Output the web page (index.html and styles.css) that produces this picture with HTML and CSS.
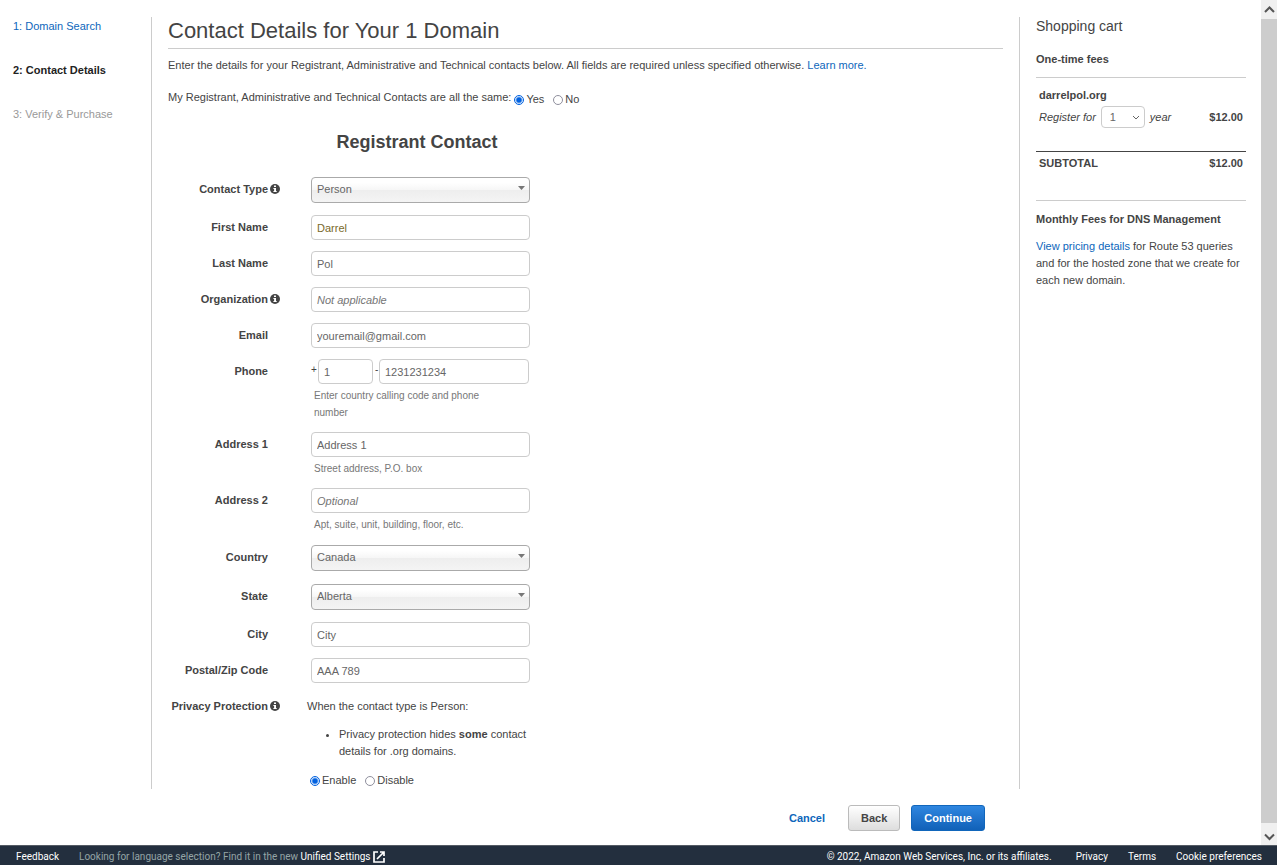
FILE: index.html
```html
<!DOCTYPE html>
<html lang="en">
<head>
<meta charset="utf-8">
<title>Contact Details</title>
<link rel="stylesheet" href="styles.css">
</head>
<body>
<svg class="defs" aria-hidden="true">
  <symbol id="info" viewBox="0 0 10 10"><circle cx="5" cy="5" r="5" fill="#444"/><path d="M4 1.5h2v1.5H4zM3.4 4H6v3h.7v1H3.4V7h.7V5h-.7z" fill="#fff"/></symbol>
</svg>
<div class="app">
  <div class="viewport">
    <div class="page">
      <div class="columns">
        <nav class="steps" aria-label="Steps">
          <a href="#">1: Domain Search</a>
          <span class="current">2: Contact Details</span>
          <span class="upcoming">3: Verify &amp; Purchase</span>
        </nav>
        <main class="content">
          <h1>Contact Details for Your 1 Domain</h1>
          <p class="intro">Enter the details for your Registrant, Administrative and Technical contacts below. All fields are required unless specified otherwise. <a href="#">Learn more.</a></p>
          <div class="same">
            <span>My Registrant, Administrative and Technical Contacts are all the same:</span>
            <div class="radios low">
              <label><input type="radio" name="same" checked>Yes</label>
              <label><input type="radio" name="same">No</label>
            </div>
          </div>
          <form class="form">
            <h2>Registrant Contact</h2>
            <div class="row picker"><label for="type">Contact Type</label><svg class="info"><use href="#info"/></svg>
              <select id="type" class="field"><option>Person</option></select></div>
            <div class="row"><label for="first">First Name</label>
              <input id="first" class="field autofilled" value="Darrel"></div>
            <div class="row"><label for="last">Last Name</label>
              <input id="last" class="field" value="Pol"></div>
            <div class="row"><label for="org">Organization</label><svg class="info"><use href="#info"/></svg>
              <input id="org" class="field" placeholder="Not applicable"></div>
            <div class="row"><label for="email">Email</label>
              <input id="email" class="field" value="youremail@gmail.com"></div>
            <div class="row"><label for="phone">Phone</label>
              <div class="control">
                <div class="phone"><span>+</span><input class="field code" aria-label="Country calling code" value="1"><span class="dash">-</span><input id="phone" class="field number" value="1231231234"></div>
                <p class="hint">Enter country calling code and phone number</p>
              </div></div>
            <div class="row"><label for="a1">Address 1</label>
              <div class="control"><input id="a1" class="field" value="Address 1"><p class="hint">Street address, P.O. box</p></div></div>
            <div class="row"><label for="a2">Address 2</label>
              <div class="control"><input id="a2" class="field" placeholder="Optional"><p class="hint">Apt, suite, unit, building, floor, etc.</p></div></div>
            <div class="row picker"><label for="country">Country</label>
              <select id="country" class="field"><option>Canada</option></select></div>
            <div class="row picker"><label for="state">State</label>
              <select id="state" class="field"><option>Alberta</option></select></div>
            <div class="row"><label for="city">City</label>
              <input id="city" class="field" value="City"></div>
            <div class="row"><label for="zip">Postal/Zip Code</label>
              <input id="zip" class="field" value="AAA 789"></div>
            <div class="row last"><span class="label">Privacy Protection</span><svg class="info"><use href="#info"/></svg>
              <div class="privacy">
                <p>When the contact type is Person:</p>
                <ul><li>Privacy protection hides <b>some</b> contact details for .org domains.</li></ul>
                <div class="radios">
                  <label><input type="radio" name="privacy" checked>Enable</label>
                  <label><input type="radio" name="privacy">Disable</label>
                </div>
              </div></div>
          </form>
        </main>
        <aside class="cart">
          <h2>Shopping cart</h2>
          <h3 class="fees">One-time fees</h3>
          <div class="item">
            <strong>darrelpol.org</strong>
            <div class="line">
              <label for="years">Register for</label>
              <select id="years"><option>1</option></select>
              <em>year</em>
              <b class="price">$12.00</b>
            </div>
          </div>
          <div class="subtotal"><b>SUBTOTAL</b><b class="price">$12.00</b></div>
          <section class="monthly">
            <h3>Monthly Fees for DNS Management</h3>
            <p><a href="#">View pricing details</a> for Route 53 queries and for the hosted zone that we create for each new domain.</p>
          </section>
        </aside>
      </div>
      <div class="actions">
        <button type="button" class="cancel">Cancel</button>
        <button type="button" class="back">Back</button>
        <button type="button" class="continue">Continue</button>
      </div>
    </div>
    <div class="scrollbar" aria-hidden="true">
      <svg viewBox="0 0 16 19"><path d="M4 12l4.500-4.500L13 12" fill="none" stroke="#555" stroke-width="2"/></svg>
      <div class="thumb"></div>
      <svg class="down" viewBox="0 0 16 22"><path d="M4 11.500l4.500 4.500 4.500-4.500" fill="none" stroke="#555" stroke-width="2"/></svg>
    </div>
  </div>
  <footer class="footer">
    <a href="#">Feedback</a>
    <span class="lang">Looking for language selection? Find it in the new <a href="#">Unified Settings</a></span>
    <svg class="ext" viewBox="0 0 12 12" fill="none" stroke="#fff" stroke-width="1.700"><path d="M5 1H1v10h10V7M7 1h4v4M11 1L4 8"/></svg>
    <span class="legal">© 2022, Amazon Web Services, Inc. or its affiliates.</span>
    <a href="#">Privacy</a>
    <a href="#">Terms</a>
    <a href="#">Cookie preferences</a>
  </footer>
</div>
</body>
</html>
```
FILE: styles.css
```css
* { box-sizing: border-box; }
body { margin: 0; font: 11px/17px "Liberation Sans", Arial, sans-serif; color: #444; background: #fff; }
h1, h2, h3, p, ul { margin: 0; }
a { color: #0d66bb; text-decoration: none; }
input, select, button { font: inherit; color: inherit; margin: 0; }
.defs { position: absolute; width: 0; height: 0; }
.app { display: flex; flex-direction: column; min-height: 100vh; }
.viewport { display: flex; flex: 1; }
.page { flex: 1; display: flex; flex-direction: column; padding: 17px 15px 14px 0; }
.columns { display: flex; flex: 1; }

.steps { width: 151px; flex: none; padding: 1px 0 0 13px; display: flex; flex-direction: column; gap: 27px; }
.current { font-weight: bold; color: #222; }
.upcoming { color: #999; }

.content { flex: 1; border: 1px solid #ccc; border-width: 0 1px; padding: 0 16px; }
h1 { font-size: 22px; line-height: 26px; font-weight: normal; padding: 1px 0 4px; border-bottom: 1px solid #ccc; }
.intro { margin-top: 8px; }
.same { display: flex; gap: 3px; margin-top: 15px; }
.radios { display: flex; gap: 9px; }
.radios label { display: flex; align-items: center; gap: 2px; }
.low { padding-top: 2px; }
input[type="radio"] { appearance: none; width: 10px; height: 10px; border: 1px solid #8f8f9d; border-radius: 50%; background: #fff; }
input[type="radio"]:checked { border-color: #0061e0; background: radial-gradient(circle, #0061e0 0 2px, #fff 4px); }

.form { width: 362px; margin-top: 22px; }
.form h2 { font-size: 18px; line-height: 24px; text-align: center; padding-left: 136px; margin-bottom: 22px; white-space: nowrap; }
.row { display: grid; grid-template-columns: 100px 43px 219px; margin-bottom: 11px; }
.row > :first-child { grid-column: 1; text-align: right; font-weight: bold; white-space: nowrap; padding-top: 4px; }
.row > :last-child { grid-column: 3; }
.last { margin-bottom: 0; }
.info { width: 10px; height: 10px; margin: 7px 0 0 2px; }
.picker { padding: 1px 0; }
.field { display: block; width: 100%; height: 25px; border: 1px solid #ccc; border-radius: 4px; padding: 0 5px; color: #666; background: #fff; }
.autofilled { color: #7a6a2a; }
.field::placeholder { color: #757575; font-style: italic; opacity: 1; }
select.field { appearance: none; height: 26px; padding: 0 5px 2px; border-color: #aaa; background: url("data:image/svg+xml,%3Csvg xmlns='http://www.w3.org/2000/svg' width='7' height='4'%3E%3Cpath d='M0 0h7L3.500 4z' fill='%23777'/%3E%3C/svg%3E") no-repeat right 4px top 8px, linear-gradient(#fff 20%, #f6f6f6 50%, #eee 52%, #f4f4f4 100%); }
.phone { display: flex; }
.phone span { width: 7px; padding-top: 2px; font-size: 10px; }
.phone .dash { width: 6px; padding-left: 2px; }
.phone .code { width: 55px; }
.phone .number { width: 150px; }
.hint { max-width: 190px; font-size: 10px; color: #777; margin: 3px 0 0 3px; }
.privacy { padding-top: 4px; margin-left: -4px; }
.privacy ul { padding-left: 32px; margin: 11px 0 12px; }
.privacy .radios { margin-left: 3px; }

.cart { width: 226px; flex: none; padding-left: 16px; }
.cart h2 { font-size: 14px; line-height: 18px; font-weight: normal; }
.cart h3 { font-size: 11px; line-height: 17px; }
.fees { margin-top: 16px; padding-bottom: 9px; border-bottom: 1px solid #ccc; }
.item { padding: 9px 3px 23px; }
.item strong { display: block; }
.line { display: flex; align-items: center; gap: 5px; margin-top: 2px; font-style: italic; }
.line select { appearance: none; width: 44px; height: 22px; border: 1px solid #ccc; border-radius: 4px; padding: 0 8px; font-style: normal; color: #666; background: url("data:image/svg+xml,%3Csvg xmlns='http://www.w3.org/2000/svg' width='8' height='5'%3E%3Cpath d='M1 1l3 3 3-3' fill='none' stroke='%23666'/%3E%3C/svg%3E") no-repeat right 4px center; }
.price { margin-left: auto; font-style: normal; }
.subtotal { display: flex; border-top: 1px solid #444; padding: 3px 3px 28px; }
.monthly { border-top: 1px solid #ccc; padding-top: 10px; }
.monthly p { margin-top: 10px; }

.actions { display: flex; justify-content: flex-end; margin: 16px 261px 0 0; }
.actions button { height: 26px; border-radius: 3px; font-weight: bold; padding: 0 12px; border: 1px solid transparent; }
.actions .cancel { color: #0d66bb; background: none; margin-right: 10px; }
.actions .back { background: linear-gradient(#fff, #ddd); border-color: #bbb; margin-right: 11px; }
.actions .continue { background: linear-gradient(#2f86e0, #1161b8); border-color: #1166bb; color: #fff; }

.scrollbar { width: 16px; flex: none; background: #f0f0f0; display: flex; flex-direction: column; }
.scrollbar svg { width: 16px; height: 19px; }
.scrollbar .down { height: 22px; }
.thumb { flex: 1; background: #cdcdcd; }

.footer { height: 20px; background: #232f3e; border-top: 1px solid #545b64; display: flex; align-items: center; gap: 20px; padding: 2px 15px 0 16px; font: 10px/16px Roboto, sans-serif; color: #fff; white-space: nowrap; }
.footer a { color: #fff; }
.lang { color: #95a5a6; }
.ext { width: 12px; height: 12px; margin-left: -17px; }
.legal { margin-left: auto; }
.legal + a { margin-left: 4px; }
```
